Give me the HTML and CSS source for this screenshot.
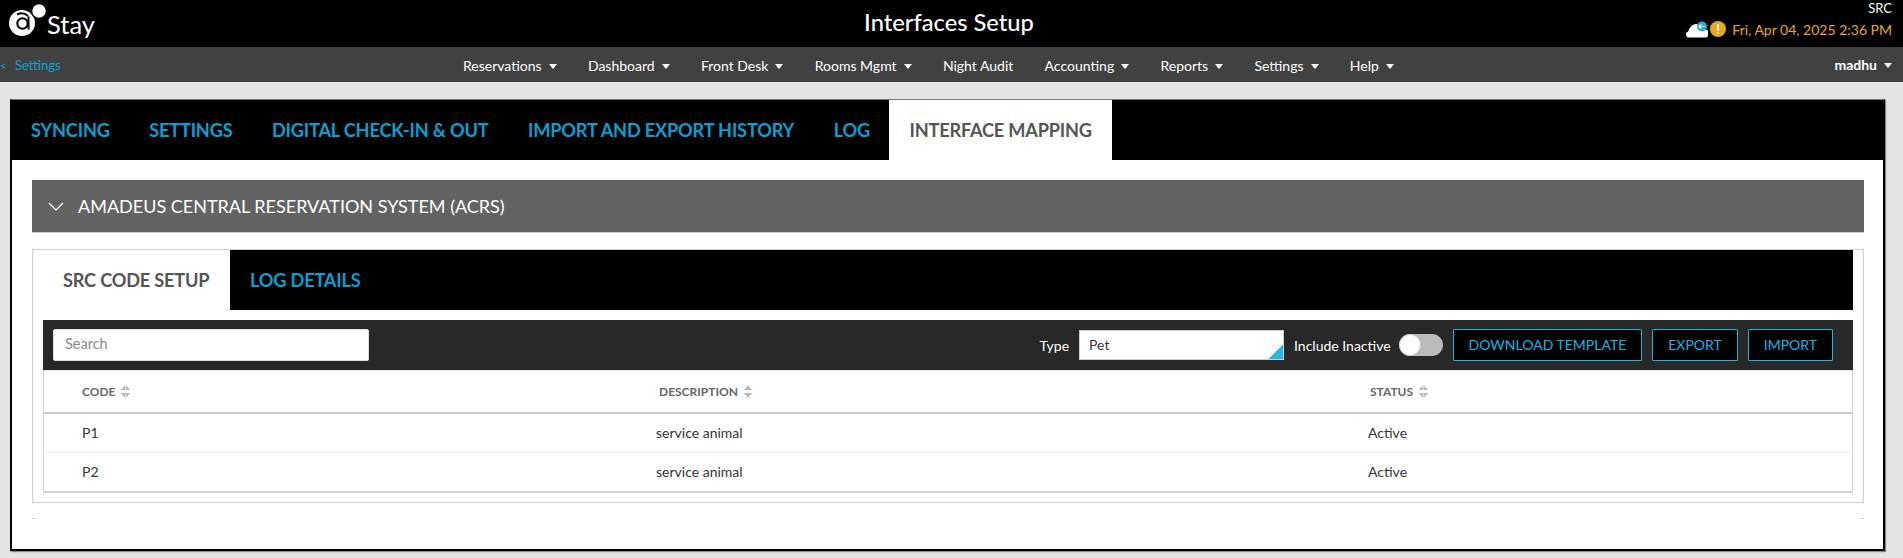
FILE: index.html
```html
<!DOCTYPE html>
<html lang="en">
<head>
<meta charset="utf-8">
<title>Interfaces Setup</title>
<link rel="stylesheet" href="styles.css">
</head>
<body>
<header class="topbar">
  <div class="brand">
    <svg class="logo" width="40" height="40" viewBox="0 0 40 40">
      <circle cx="14" cy="23" r="13" fill="#fff"/>
      <circle cx="14.500" cy="23.500" r="5.200" fill="none" stroke="#000" stroke-width="2"/>
      <path d="M20.500 16.500v13M9 14.500a10 10 0 0 1 11 1.500" fill="none" stroke="#000" stroke-width="2"/>
      <circle cx="31" cy="11" r="7.500" fill="#fff" stroke="#000" stroke-width="1.500"/>
    </svg>
    <span class="brand-name">Stay</span>
  </div>
  <h1 class="page-title">Interfaces Setup</h1>
  <div class="status">
    <div class="status-code">SRC</div>
    <div class="status-line">
      <svg width="22" height="17" viewBox="0 0 22 17">
        <path d="M3 16.500a3 3 0 0 1-.8-5.900C3.500 6 7 3 10 3c2.500 0 4.500 2.500 5 5.500h3.500a4 4 0 0 1 .5 8z" fill="#fff"/>
        <circle cx="16" cy="5.500" r="5" fill="#29abe2"/>
        <path d="M19 5.500h-6M15.300 3.300 13 5.500l2.300 2.200" fill="none" stroke="#fff" stroke-width="1.100"/>
      </svg>
      <svg width="16" height="16" viewBox="0 0 16 16">
        <circle cx="8" cy="8" r="8" fill="#e9a820"/>
        <path d="M8 3v6.500M8 11.200v1.800" stroke="#fff" stroke-width="2"/>
      </svg>
      <span class="status-date">Fri, Apr 04, 2025 2:36 PM</span>
    </div>
  </div>
</header>

<nav class="navbar">
  <a class="crumb" href="#"><span class="crumb-arrow">&lt;</span>Settings</a>
  <ul class="menu">
    <li class="caret">Reservations</li>
    <li class="caret">Dashboard</li>
    <li class="caret">Front Desk</li>
    <li class="caret">Rooms Mgmt</li>
    <li>Night Audit</li>
    <li class="caret">Accounting</li>
    <li class="caret">Reports</li>
    <li class="caret">Settings</li>
    <li class="caret">Help</li>
  </ul>
  <div class="user caret">madhu</div>
</nav>

<main class="page">
  <section class="card">
    <div class="tabs">
      <a class="tab">SYNCING</a>
      <a class="tab">SETTINGS</a>
      <a class="tab">DIGITAL CHECK-IN &amp; OUT</a>
      <a class="tab">IMPORT AND EXPORT HISTORY</a>
      <a class="tab">LOG</a>
      <a class="tab active">INTERFACE MAPPING</a>
    </div>
    <div class="card-body">
      <div class="accordion">
        <svg class="chevron" width="16" height="9" viewBox="0 0 16 9"><path d="M1 1l7 7 7-7" fill="none" stroke="#fff" stroke-width="1.200"/></svg>
        <span>AMADEUS CENTRAL RESERVATION SYSTEM (ACRS)</span>
      </div>
      <div class="panel">
        <div class="subtabs">
          <a class="subtab active">SRC CODE SETUP</a>
          <a class="subtab">LOG DETAILS</a>
        </div>
        <div class="panel-body">
          <div class="toolbar">
            <input class="search" type="text" placeholder="Search">
            <div class="tools">
              <span class="label">Type</span>
              <div class="select">Pet</div>
              <span class="label">Include Inactive</span>
              <span class="toggle"><span class="knob"></span></span>
              <button class="btn">DOWNLOAD TEMPLATE</button>
              <button class="btn">EXPORT</button>
              <button class="btn">IMPORT</button>
            </div>
          </div>
          <div class="table">
            <div class="row head">
              <div class="cell c1 sort">CODE</div>
              <div class="cell c2 sort">DESCRIPTION</div>
              <div class="cell c3 sort">STATUS</div>
            </div>
            <div class="row">
              <div class="cell c1">P1</div>
              <div class="cell c2b">service animal</div>
              <div class="cell c3b">Active</div>
            </div>
            <div class="row">
              <div class="cell c1">P2</div>
              <div class="cell c2b">service animal</div>
              <div class="cell c3b">Active</div>
            </div>
          </div>
        </div>
      </div>
      <div class="footer-marks"><i></i><i></i></div>
    </div>
  </section>
</main>
</body>
</html>
```

FILE: styles.css
```css
* { box-sizing: border-box; }
html, body { height: 100%; }
body {
  margin: 0;
  background: #e4e4e4;
  font-family: Lato, "Liberation Sans", sans-serif;
  font-size: 14px;
  color: #333;
  overflow: hidden;
}
.topbar {
  height: 47px;
  background: #000;
  color: #fff;
  display: flex;
  align-items: flex-start;
  justify-content: space-between;
  padding: 0 11px 0 8px;
  position: relative;
}
.brand { display: flex; align-items: flex-start; }
.logo { margin-right: -1px; }
.brand-name { font-size: 25.500px; font-weight: 400; line-height: 30px; margin-top: 9px; }
.page-title {
  margin: 0;
  font-size: 23.700px;
  font-weight: 500;
  line-height: 30px;
  position: absolute;
  top: 7px;
  left: 0;
  right: 0;
  text-align: center;
  padding-right: 5px;
}
.status { display: flex; flex-direction: column; align-items: flex-end; }
.status-code { font-size: 13px; line-height: 16px; }
.status-line { display: flex; align-items: center; gap: 2px; margin-top: 3px; height: 20px; }
.status-date { color: #e9a820; font-size: 14px; margin-left: 4px; }

.navbar {
  height: 35px;
  background: #414141;
  color: #fff;
  display: flex;
  align-items: center;
  justify-content: space-between;
  padding: 0 11px 0 0;
  position: relative;
}
.crumb { color: #12a0d0; font-size: 13px; text-decoration: none; }
.crumb-arrow { display: inline-block; width: 15px; font-size: 12px; }
.menu {
  list-style: none;
  margin: 1px 0 0;
  padding: 0;
  position: absolute;
  left: 463px;
  display: flex;
  gap: 31.300px;
  font-size: 14px;
}
.caret::after {
  content: "";
  display: inline-block;
  margin-left: 7px;
  vertical-align: 2px;
  border-left: 4px solid transparent;
  border-right: 4px solid transparent;
  border-top: 5px solid #fff;
}
.user { font-weight: 700; font-size: 14px; }

.page { padding: 17px 18px 7px 10px; height: 476px; }
.card {
  height: 100%;
  background: #fff;
  border: 2px solid #000;
  border-top: 1px solid #777;
  box-shadow: 1px 1px 1px #888;
}
.tabs { height: 60px; background: #000; display: flex; padding-bottom: 1px; }
.tab {
  padding: 0 20px;
  display: flex;
  align-items: center;
  color: #0a9fd0;
  font-size: 18.200px;
  font-weight: 700;
  letter-spacing: -0.2px;
  margin-right: -0.5px;
}
.tab:first-child { margin-left: -1px; }
.tab.active { background: #fff; color: #555; margin-bottom: -1px; }
.card-body { padding: 20px 19px 0 20px; }
.accordion {
  height: 53px;
  background: #636363;
  border-bottom: 1px solid #ccc;
  color: #fff;
  display: flex;
  align-items: center;
  font-size: 18px;
  padding-left: 16px;
}
.chevron { margin-right: 14px; }
.panel {
  margin-top: 16px;
  height: 254px;
  border: 1px solid #d0d0d0;
}
.subtabs { height: 60px; background: #000; display: flex; margin-right: 10px; }
.subtab {
  display: flex;
  align-items: center;
  padding: 0 20px;
  color: #0a9fd0;
  font-size: 18.200px;
  font-weight: 700;
  letter-spacing: -0.2px;
  white-space: nowrap;
}
.subtab.active { background: #fff; color: #555; width: 197px; padding-left: 30px; }
.panel-body { padding: 10px 10px 0 10px; }
.toolbar {
  height: 50px;
  background: #282828;
  display: flex;
  align-items: center;
  justify-content: space-between;
  padding: 0 20px 0 10px;
}
.search {
  width: 316px;
  height: 32px;
  border: 1px solid #ddd;
  border-radius: 2px;
  padding: 0 11px 3px;
  font-family: inherit;
  font-size: 14.500px;
  background: #fff;
}
.search::placeholder { color: #8a8a8a; }
.tools { display: flex; align-items: center; }
.label { color: #fff; font-size: 14px; }
.select {
  width: 205px;
  height: 30px;
  margin: 0 10px;
  background: linear-gradient(135deg, #fff 0, #fff calc(100% - 10px), #29b6e0 calc(100% - 10px));
  border: 1px solid #ccc;
  padding-left: 9px;
  line-height: 28px;
  color: #333;
  font-size: 14px;
}
.toggle {
  width: 44px;
  height: 22px;
  margin: 0 10px 0 8px;
  border-radius: 11px;
  background: #bbb;
  display: flex;
  align-items: center;
}
.knob {
  width: 22px;
  height: 22px;
  border-radius: 50%;
  background: #fff;
  border: 1px solid #ccc;
}
.btn {
  height: 32px;
  background: #000;
  color: #1db4e4;
  border: 1px solid #1db4e4;
  border-radius: 1px;
  font-family: inherit;
  font-size: 14px;
  padding: 0 15px 2px;
  margin-left: 10px;
}
.toggle + .btn { margin-left: 0; }
.table {
  border: 1px solid #d4d4d4;
  border-top: 1px solid #e4e4e4;
  border-bottom-width: 2px;
}
.row {
  height: 39px;
  display: flex;
  align-items: center;
  position: relative;
  border-bottom: 1px solid #eee;
  color: #333;
  font-size: 14px;
  padding-bottom: 2px;
}
.row:last-child { border-bottom: 0; height: 38px; }
.row.head {
  height: 43px;
  border-bottom: 2px solid #c8c8c8;
  font-size: 12px;
  font-weight: 700;
  color: #666;
  padding-bottom: 0;
}
.c1 { width: 577px; padding-left: 38px; flex: none; }
.c2 { width: 711px; padding-left: 38px; flex: none; }
.c3 { padding-left: 38px; }
.c2b { width: 712px; padding-left: 35px; flex: none; }
.c3b { padding-left: 35px; }
.sort::after {
  content: "";
  display: inline-block;
  width: 9px;
  height: 13px;
  margin-left: 6px;
  vertical-align: -2px;
  background:
    linear-gradient(to bottom right, transparent 50%, #bbb 50%) left top / 4.500px 5px no-repeat,
    linear-gradient(to bottom left, transparent 50%, #bbb 50%) right top / 4.500px 5px no-repeat,
    linear-gradient(to top right, transparent 50%, #bbb 50%) left bottom / 4.500px 5px no-repeat,
    linear-gradient(to top left, transparent 50%, #bbb 50%) right bottom / 4.500px 5px no-repeat;
}
.footer-marks { display: flex; justify-content: space-between; margin-top: 15px; }
.footer-marks i { width: 3px; height: 1px; background: #ccc; }
```
